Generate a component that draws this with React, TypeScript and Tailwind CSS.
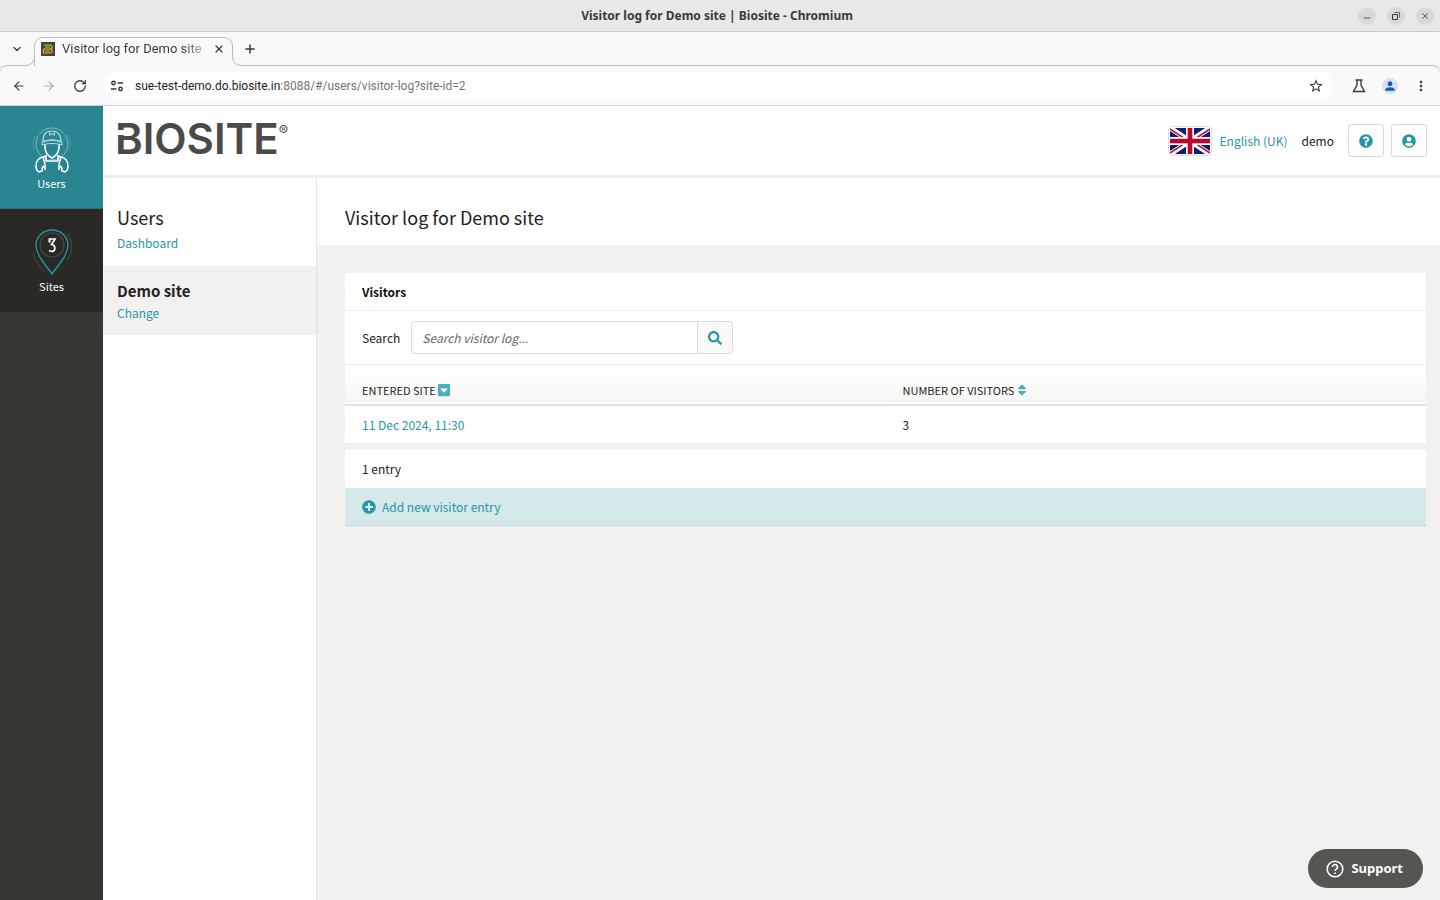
import React, { useState } from 'react';
import { ArrowLeft, ArrowRight, ChevronDown, Minus, Plus, RotateCw, X } from 'lucide-react';
import { FaCaretSquareDown, FaPlusCircle, FaQuestionCircle, FaSearch, FaSort, FaUserCircle } from 'react-icons/fa';
import { MdMoreVert, MdPerson, MdStarBorder } from 'react-icons/md';

const visitors = [{ id: 1, entered: '11 Dec 2024, 11:30', count: 3 }];

const WorkerIcon = () => (
  <svg viewBox="0 0 42 48" className="w-[42px] h-12" fill="none" stroke="#fff" strokeWidth="1.5" strokeLinejoin="round">
    <circle cx="21" cy="18" r="16" stroke="#7fbac1" strokeWidth="1" strokeDasharray="28 2" />
    <path d="M37 9a18.500 18.500 0 0 1 1 16M4 10a18.500 18.500 0 0 0-1 14" stroke="#5fa5ae" strokeWidth="1" strokeDasharray="2 1" />
    <path d="M14 18v3c0 5 3 9 7 11 4-2 7-6 7-11v-3" fill="#288591" />
    <path d="M12 16c0-8 3-11 9-11s9 3 9 11c-5-2-13-2-18 0z" fill="#288591" stroke="#b8dade" strokeWidth="1.200" />
    <path d="M11 16c6-3 14-3 20 0v3c-6-2-14-2-20 0zM18 5l1 5M24 5l-1 5M18 8h6" stroke="#b8dade" strokeWidth="1" />
    <path d="M15 29v6h12v-6M15 30l-3 1 2 7v6M27 30l3 1-2 7v6" />
    <path d="M12 31c-5 1-7 4-7 9 0 3 1 5 3 6l3-1c0-3 0-4 2-5M30 31c5 1 7 4 7 9 0 3-1 5-3 6l-3-1c0-3 0-4-2-5" />
  </svg>
);

const PinIcon = () => (
  <svg viewBox="0 0 42 48" className="w-[42px] h-12" fill="none">
    <path d="M36 5a19 19 0 0 1 2 23l-2 3M2 24c2 7 6 13 12 20" stroke="#4b4b48" strokeWidth="1" />
    <circle cx="21" cy="16" r="12" stroke="#4b4b48" strokeWidth="1.200" />
    <path d="M21 45C14 35 5 26 5 16a16 15 0 0 1 32 0c0 10-9 19-16 29z" stroke="#2796a5" strokeWidth="1.400" />
    <path d="M18 10h6l-3.500 5.500c4.500.5 4.500 7 0 7l-2.500-1" stroke="#fff" strokeWidth="1.700" />
    <path d="M18.500 9.500v4" stroke="#fff" strokeWidth="2" />
  </svg>
);

const UnionJack = () => (
  <svg viewBox="0 0 60 40" preserveAspectRatio="none" className="w-full h-full">
    <rect width="60" height="40" fill="#012179" />
    <path d="M0 0l60 40M60 0L0 40" stroke="#fff" strokeWidth="8" />
    <path d="M0 1.500L26 19M34 21l26 17.500M60 1.500L34 19M26 21L0 38.500" stroke="#c8102e" strokeWidth="2.500" />
    <path d="M30 0v40M0 20h60" stroke="#fff" strokeWidth="12" />
    <path d="M30 0v40M0 20h60" stroke="#c0022e" strokeWidth="7" />
  </svg>
);

function BrowserChrome() {
  return (
    <div className="font-['Noto_Sans',sans-serif] text-[#3a3a3a]">
      <div className="flex items-center h-8 bg-[#e9e8e8] border-b border-[#c9c7c7]">
        <div className="flex-1" />
        <div className="text-[12px] font-bold">Visitor log for Demo site | Biosite - Chromium</div>
        <div className="flex-1 flex justify-end gap-[11px] pr-[6px]">
          <button aria-label="Minimize" className="flex items-end justify-center w-[18px] h-[18px] pb-0.5 rounded-full bg-[#d9d8d7]">
            <Minus className="w-2.5 h-2.5" />
          </button>
          <button aria-label="Restore" className="flex items-center justify-center w-[18px] h-[18px] rounded-full bg-[#d9d8d7]">
            <svg viewBox="0 0 8 8" className="w-2 h-2" fill="none" stroke="#3a3a3a">
              <path d="M.5 2.500h5v5h-5z" />
              <path d="M2.500.5h5v5" strokeWidth=".7" />
            </svg>
          </button>
          <button aria-label="Close" className="flex items-center justify-center w-[18px] h-[18px] rounded-full bg-[#d9d8d7]">
            <X className="w-2.5 h-2.5" />
          </button>
        </div>
      </div>

      <div className="flex h-[33px] bg-[#f9f8f9]">
        <button aria-label="Search tabs" className="flex items-center justify-end w-[25px] pr-0.5">
          <ChevronDown className="w-3 h-3" strokeWidth={2.5} />
        </button>
        <svg viewBox="0 0 10 10" className="relative z-10 self-end w-2.5 h-2.5 -mb-px">
          <path d="M0 9.500Q9.500 9.500 10 0V10H0z" fill="#faf9fa" />
          <path d="M0 9.500Q9.500 9.500 9.500 0" fill="none" stroke="#bdbbbb" />
        </svg>
        <div className="relative z-10 flex items-center w-[199px] mt-[5px] -mb-px pl-1.5 pr-[7px] -ml-px rounded-t-[9px] border-x border-t border-[#bdbbbb] bg-[#faf9fa]">
          <svg viewBox="0 0 14 14" className="w-3.5 h-3.5 shrink-0 mb-1.5" fill="none">
            <rect width="14" height="14" fill="#46443a" />
            <path d="M2.500 3h7l1.500 1.500V6L9.500 7 11 8v2l-1.500 1h-7V7h7M4 5h5M4 9h5" stroke="#d5c03a" strokeWidth="1.200" />
          </svg>
          <div className="w-[148px] mb-1.5 ml-[7px] whitespace-nowrap font-['Roboto',sans-serif] text-[13px] leading-5 [mask-image:linear-gradient(to_right,#000_120px,#0003_146px)]">Visitor log for Demo site</div>
          <button aria-label="Close tab" className="ml-auto mb-1.5">
            <X className="w-3 h-3" strokeWidth={2.5} />
          </button>
        </div>
        <svg viewBox="0 0 10 10" className="relative z-10 self-end w-2.5 h-2.5 -mb-px -ml-px">
          <path d="M0 0Q.5 9.500 10 9.500V10H0z" fill="#faf9fa" />
          <path d="M.5 0Q.5 9.500 10 9.500" fill="none" stroke="#bdbbbb" />
        </svg>
        <button aria-label="New tab" className="flex items-center ml-px">
          <Plus className="w-3.5 h-3.5" strokeWidth={2.5} />
        </button>
      </div>

      <div className="flex items-center h-[41px] rounded-t-lg border-y border-t-[#bdbbbb] border-b-[#d3d2d2] bg-[#faf9fa] pl-3 pr-[13px]">
        <button aria-label="Back"><ArrowLeft className="w-3.5 h-3.5" /></button>
        <button aria-label="Forward" className="ml-4 text-[#adadad]"><ArrowRight className="w-3.5 h-3.5" /></button>
        <button aria-label="Reload" className="ml-[17px]"><RotateCw className="w-3.5 h-3.5" strokeWidth={2.2} /></button>
        <div className="flex-1 flex items-center h-7 ml-4 mr-[19px] pl-2 pr-[9px] rounded-full bg-white">
          <svg viewBox="0 0 12 12" className="w-3 h-3 shrink-0" fill="none" stroke="#333" strokeWidth="1.400">
            <path d="M6.500 3H12M0 9h5.500" />
            <circle cx="2.500" cy="3" r="1.700" />
            <circle cx="9.500" cy="9" r="1.700" />
          </svg>
          <div className="flex-1 ml-3 font-['Roboto',sans-serif] text-[12px] leading-5 text-[#757575]">
            <span className="text-[#1d1d1d]">sue-test-demo.do.biosite.in</span>:8088/#/users/visitor-log?site-id=2
          </div>
          <button aria-label="Bookmark"><MdStarBorder className="w-4 h-4" /></button>
        </div>
        <button aria-label="Labs">
          <svg viewBox="0 0 14 14" className="w-3.5 h-3.5" fill="none" stroke="#3a3a3a" strokeWidth="1.400">
            <path d="M3.500 1h7M5 1v5L1.500 12.500h11L9 6V1" />
          </svg>
        </button>
        <button aria-label="Profile" className="flex items-center justify-center w-4 h-4 ml-4 rounded-full bg-[#d3e3f3] text-[#1b57b5]"><MdPerson className="w-3.5 h-3.5" /></button>
        <button aria-label="Menu" className="ml-[15px] -mr-0.5"><MdMoreVert className="w-4 h-4" /></button>
      </div>
    </div>
  );
}

export default function App() {
  const [search, setSearch] = useState('');

  return (
    <div className="flex flex-col min-h-screen bg-[#f2f1f0]">
      <BrowserChrome />

      <div className="flex flex-1 font-['Noto_Sans_CJK_SC',sans-serif] text-[12px] leading-5 text-[#222]">
        <nav className="w-[103px] shrink-0 bg-[#373632] text-[11px] leading-4 text-white">
          <a href="#users" className="flex flex-col items-center h-[103px] pt-5 gap-px bg-[#288591] border-b border-dotted border-[#4a4a45]">
            <WorkerIcon />
            Users
          </a>
          <a href="#sites" className="flex flex-col items-center h-[103px] pt-5 gap-px bg-[#2a2926]">
            <PinIcon />
            Sites
          </a>
        </nav>

        <div className="flex-1 flex flex-col">
          <header className="flex items-center h-[72px] pl-3 pr-[13px] bg-white border-b-[3px] border-[#f0efee]">
            <div className="relative flex items-start pb-1 text-[#4b4a49] font-['Inter',sans-serif]">
              <span className="text-[42px] leading-10 font-semibold">BIOSITE</span>
              <span className="absolute left-0 top-[11px] w-3 h-[5px] bg-white" />
              <span className="pt-1 text-[14px] leading-4">®</span>
            </div>
            <div className="flex items-center ml-auto">
              <span className="w-11 h-[30px] p-px rounded-sm border border-[#ddd] overflow-hidden"><UnionJack /></span>
              <a href="#language" className="ml-2 text-[#2796a5]">English (UK)</a>
              <span className="ml-[14px]">demo</span>
              <button aria-label="Help" className="flex items-center justify-center w-9 h-[33px] ml-[14px] rounded-[3px] border border-[#d9d9d9] text-[#2796a5]">
                <FaQuestionCircle className="w-3.5 h-3.5" />
              </button>
              <button aria-label="Account" className="flex items-center justify-center w-9 h-[33px] ml-[7px] rounded-[3px] border border-[#d9d9d9] text-[#2796a5]">
                <FaUserCircle className="w-3.5 h-3.5" />
              </button>
            </div>
          </header>

          <div className="flex flex-1">
            <aside className="w-[214px] shrink-0 bg-white border-r border-[#e4e3e2]">
              <div className="h-[88px] pt-[27px] pl-[14px]">
                <h2 className="text-[18px] leading-6">Users</h2>
                <a href="#dashboard" className="block mt-1 text-[#2796a5]">Dashboard</a>
              </div>
              <div className="h-[69px] pt-[13px] pl-[14px] bg-[#f2f1f0]">
                <h3 className="text-[15px] leading-6 font-bold">Demo site</h3>
                <a href="#change" className="block text-[#2796a5]">Change</a>
              </div>
            </aside>

            <main className="flex-1">
              <div className="h-[67px] pt-[27px] pl-7 bg-white">
                <h1 className="text-[18px] leading-6">Visitor log for Demo site</h1>
              </div>

              <section className="mt-7 ml-7 mr-[14px]">
                <div className="bg-white">
                  <h2 className="h-[38px] pl-[17px] leading-[38px] font-bold text-[#111] border-b border-[#f0efee]">Visitors</h2>
                  <div className="flex items-center h-[54px] pl-[17px] border-b border-[#f0efee]">
                    <label htmlFor="search">Search</label>
                    <input
                      id="search"
                      type="text"
                      placeholder="Search visitor log..."
                      value={search}
                      onChange={(e) => setSearch(e.target.value)}
                      className="w-[287px] h-[33px] ml-[11px] px-2.5 rounded-l-[3px] border border-[#dedddd] italic placeholder:text-[#666]"
                    />
                    <button aria-label="Search" className="flex items-center justify-center w-9 h-[33px] -ml-px rounded-r-[3px] border border-[#dedddd] bg-[#f9f9f8] text-[#2796a5]">
                      <FaSearch className="w-3.5 h-3.5" />
                    </button>
                  </div>
                  <table className="w-full table-fixed">
                    <thead>
                      <tr className="h-10 text-left text-[11px] text-[#222] border-b-2 border-[#e2e2e1] bg-linear-to-b from-white to-[#f7f6f5]">
                        <th className="w-1/2 pl-[17px] pt-2.5 font-normal">
                          <button className="flex items-center gap-px">ENTERED SITE <FaCaretSquareDown className="w-3.5 h-3.5 text-[#4baebb]" /></button>
                        </th>
                        <th className="pl-[17px] pt-2.5 font-normal">
                          <button className="flex items-center gap-px">NUMBER OF VISITORS <FaSort className="w-3.5 h-3.5 text-[#4baebb]" /></button>
                        </th>
                      </tr>
                    </thead>
                    <tbody>
                      {visitors.map((v) => (
                        <tr key={v.id} className="h-[38px]">
                          <td className="pl-[17px]"><a href="#entry" className="text-[#2796a5]">{v.entered}</a></td>
                          <td className="pl-[17px]">{v.count}</td>
                        </tr>
                      ))}
                    </tbody>
                  </table>
                </div>
                <div className="h-[38px] mt-[7px] pl-[17px] leading-[38px] bg-white">{visitors.length} entry</div>
                <a href="#add" className="flex items-center h-[38px] gap-1.5 pl-[17px] bg-[#d5e8ea] border-b border-[#c0d8da] text-[#2796a5]">
                  <FaPlusCircle className="w-3.5 h-3.5" />
                  Add new visitor entry
                </a>
              </section>
            </main>
          </div>
        </div>
      </div>

      <button className="fixed right-[17px] bottom-3 flex items-center h-[39px] gap-[7px] pl-[18px] pr-5 rounded-full bg-[#555552] text-white font-['Noto_Sans',sans-serif] text-[13px] font-bold">
        <svg viewBox="0 0 18 18" className="w-[18px] h-[18px]" fill="none" stroke="#fff" strokeWidth="1.600">
          <circle cx="9" cy="9" r="7.800" />
          <path d="M6.500 7a2.500 2.500 0 1 1 3.800 2.100C9.300 9.700 9 10 9 11M9 12.500v1.500" />
        </svg>
        Support
      </button>
    </div>
  );
}
